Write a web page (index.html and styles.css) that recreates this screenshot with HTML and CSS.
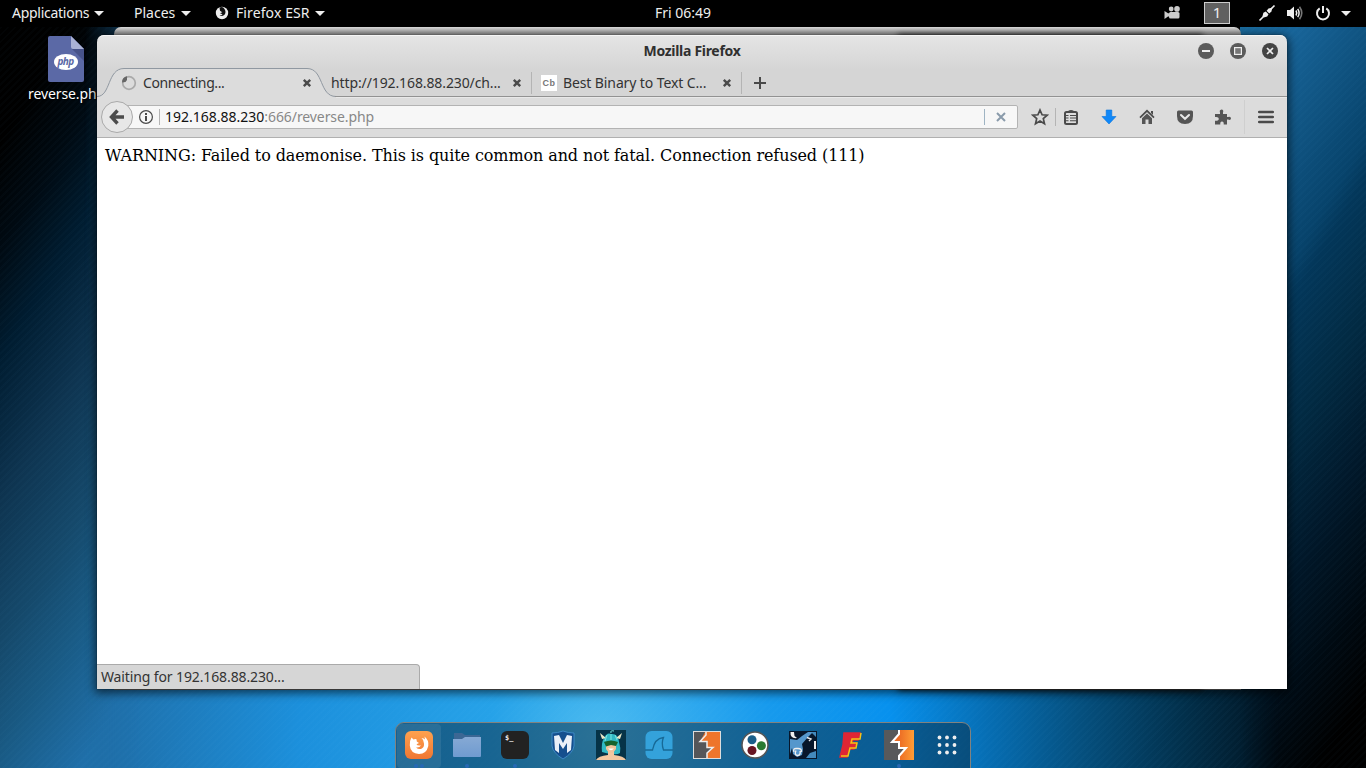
FILE: index.html
```html
<!DOCTYPE html>
<html lang="en">
<head>
<meta charset="utf-8">
<title>Mozilla Firefox</title>
<link rel="stylesheet" href="styles.css">
</head>
<body>
<div class="desktop">
  <header class="topbar">
    <div class="menu m-apps"><span class="t-apps">Applications</span><i class="caret"></i></div>
    <div class="menu m-places"><span class="t-places">Places</span><i class="caret"></i></div>
    <div class="menu m-ff">
      <svg width="14" height="14" viewBox="0 0 14 14"><circle cx="7" cy="7" r="6.2" fill="#eee"/><path d="M4.5 1.5Q8 0 9.5 3Q11.5 6 9.5 8.8Q7 11 4.5 9.5Q6.8 9.6 7.5 8.2L5 7.2L7.3 6.2L5 4.8Z" fill="#111"/></svg>
      <span class="t-ff">Firefox ESR</span><i class="caret"></i>
    </div>
    <div class="clock">Fri 06:49</div>
    <div class="tray">
      <svg class="cam" width="17" height="14" viewBox="0 0 17 14" fill="#ccc"><circle cx="7.2" cy="3" r="2.4"/><circle cx="13" cy="2.9" r="2.8"/><rect x="5" y="6" width="10.5" height="6.5" rx="1.5"/><path d="M.5 5L4 7.2H6V10.5H4L.5 13Z"/></svg>
      <span class="ws">1</span>
      <svg class="plug" width="18" height="18" viewBox="0 0 18 18"><path d="M1.5 16.5L5 13M13 5L16.5 1.5" stroke="#eee" stroke-width="1.6"/><path d="M4 14L5.4 8.8L7.8 7.5L10.5 10.2L9.2 12.6Z" fill="#eee"/><path d="M8.6 6.8L10.5 4.6L14.5 3.5L13.4 7.5L11.2 9.4Z" fill="#eee"/></svg>
      <svg class="vol" width="18" height="16" viewBox="0 0 18 16" fill="none"><path d="M1 5H4L8 1.5V14.5L4 11H1Z" fill="#eee"/><path d="M10 5.5Q11.5 8 10 10.5M11.7 3.8Q14.5 8 11.7 12.2" stroke="#eee" stroke-width="1.5"/><path d="M13.5 1.8Q18 8 13.5 14.2" stroke="#777" stroke-width="1.6"/></svg>
      <svg class="power" width="16" height="16" viewBox="0 0 16 16" fill="none" stroke="#eee" stroke-width="2"><path d="M4.7 3.4A6 6 0 1 0 11.3 3.4M8 1V8"/></svg>
      <i class="caret"></i>
    </div>
  </header>

  <div class="file">
    <svg width="36" height="46" viewBox="0 0 36 46"><path d="M2 0H23L36 13V44Q36 46 34 46H2Q0 46 0 44V2Q0 0 2 0Z" fill="#5b69a6"/><path d="M24 13H36V25Z" fill="#47538a"/><path d="M23 0L36 13H25Q23 13 23 11Z" fill="#aab2d6"/><ellipse cx="18" cy="26" rx="12" ry="8" fill="#fff"/><text x="17.5" y="29" text-anchor="middle" class="php">php</text></svg>
    <span>reverse.php</span>
  </div>

  <div class="backwin"></div>
  <div class="backwin dark"></div>

  <main class="window">
    <div class="titlebar">
      <h1>Mozilla Firefox</h1>
      <div class="controls">
        <svg width="16" height="16" viewBox="0 0 16 16"><circle cx="8" cy="8" r="8" fill="#5b5b5b"/><path d="M4 8H12" stroke="#eee" stroke-width="2"/></svg>
        <svg width="16" height="16" viewBox="0 0 16 16"><circle cx="8" cy="8" r="8" fill="#5b5b5b"/><rect x="4.6" y="4.6" width="6.8" height="6.8" fill="#777" stroke="#eee" stroke-width="1.2"/></svg>
        <svg width="16" height="16" viewBox="0 0 16 16"><circle cx="8" cy="8" r="8" fill="#444"/><path d="M5 5L11 11M11 5L5 11" stroke="#eee" stroke-width="1.7"/></svg>
      </div>
    </div>

    <div class="tabs">
      <svg class="tabshape" width="1190" height="30" viewBox="0 0 1190 30"><path d="M0 28.5C14 28.5 10 .5 27 .5H210C227 .5 222 28.5 239 28.5V30H0Z" fill="#dcdcdc"/><path d="M239 29H1190V30H239Z" fill="#e8e8e8"/><path d="M0 28.5C14 28.5 10 .5 27 .5H210C227 .5 222 28.5 239 28.5H1190" fill="none" stroke="#9098a1"/><path d="M238 28.5H1190" stroke="#929292"/></svg>
      <div class="tab first">
        <svg width="16" height="16" viewBox="0 0 16 16" fill="none"><circle cx="8" cy="8" r="6.3" stroke="#aaa" stroke-width="1.7"/><path d="M1 7.5Q1 2 6 1.2V5L4.5 7Z" fill="#666"/></svg>
        <span class="label t-con">Connecting...</span>
        <svg class="x" width="10" height="10" viewBox="0 0 10 10"><path d="M1.8 1.8L8.2 8.2M8.2 1.8L1.8 8.2" stroke="#4a4a4a" stroke-width="2.4"/></svg>
      </div>
      <div class="tab second">
        <span class="label t-http">http://192.168.88.230/ch...</span>
        <svg class="x" width="10" height="10" viewBox="0 0 10 10"><path d="M1.8 1.8L8.2 8.2M8.2 1.8L1.8 8.2" stroke="#4a4a4a" stroke-width="2.4"/></svg>
      </div>
      <div class="tab third">
        <b class="cb">Cb</b>
        <span class="label t-best">Best Binary to Text C...</span>
        <svg class="x" width="10" height="10" viewBox="0 0 10 10"><path d="M1.8 1.8L8.2 8.2M8.2 1.8L1.8 8.2" stroke="#4a4a4a" stroke-width="2.4"/></svg>
      </div>
      <svg class="plus" width="12" height="12" viewBox="0 0 12 12"><path d="M6 0V12M0 6H12" stroke="#4a4a4a" stroke-width="2"/></svg>
    </div>

    <div class="navbar">
      <div class="back"><svg width="16" height="16" viewBox="0 0 16 16" fill="none" stroke="#4c4c4c"><path d="M8.5 1.5L2.5 8L8.5 14.5M3 8H15" stroke-width="3.4"/></svg></div>
      <div class="urlbar">
        <svg class="info" width="16" height="16" viewBox="0 0 16 16"><circle cx="8" cy="8" r="6.4" fill="none" stroke="#4a4a4a" stroke-width="1.2"/><path d="M8 7V12M8 4V6" stroke="#4a4a4a" stroke-width="2"/></svg>
        <i class="sep"></i>
        <span class="url"><b>192.168.88.230</b><span class="rest">:666/reverse.php</span></span>
        <i class="sep end"></i>
        <svg class="stop" width="10" height="10" viewBox="0 0 10 10"><path d="M1 1L9 9M9 1L1 9" stroke="#8a9bab" stroke-width="2"/></svg>
      </div>
      <svg class="i-star" width="18" height="18" viewBox="0 0 18 18"><path d="M9 2L11.1 6.8L16.2 7.2L12.3 10.6L13.5 15.8L9 13L4.5 15.8L5.7 10.6L1.8 7.2L6.9 6.8Z" fill="none" stroke="#4a4a4a" stroke-width="1.7"/></svg>
      <i class="sep nav1"></i>
      <svg class="i-list" width="16" height="16" viewBox="0 0 16 16"><rect x="2" y="3" width="12" height="12" rx="1.5" fill="none" stroke="#4a4a4a" stroke-width="2"/><path d="M5 3Q5 1 8 1Q11 1 11 3Z" fill="#4a4a4a"/><path d="M3 6.5H5.5M7 6.5H13M3 9H5.5M7 9H13M3 11.7H5.5M7 11.7H13" stroke="#4a4a4a" stroke-width="1.1"/></svg>
      <svg class="i-down" width="16" height="16" viewBox="0 0 16 16"><path d="M5.2 1H10.8V7.5H15L8 15L1 7.5H5.2Z" fill="#1088f8" stroke="#0874dc" stroke-width=".6"/></svg>
      <svg class="i-home" width="16" height="16" viewBox="0 0 16 16"><path d="M1 8.6L8 1.8L15 8.6" fill="none" stroke="#4c4c4c" stroke-width="1.7"/><path d="M8 4.5L13 9.2V15H9.5V10.5H6.5V15H3V9.2Z" fill="#555"/><path d="M12 2H14V6L12 4Z" fill="#4c4c4c"/></svg>
      <svg class="i-pocket" width="16" height="16" viewBox="0 0 16 16"><path d="M1.5 1.5H14.5Q16 1.5 16 3V7Q16 15 8 15Q0 15 0 7V3Q0 1.5 1.5 1.5Z" fill="#555"/><path d="M4 6L8 9.8L12 6" fill="none" stroke="#e8e8e8" stroke-width="2.1" stroke-linecap="round"/></svg>
      <svg class="i-puzzle" width="16" height="16" viewBox="0 0 16 16"><path d="M0 5H5V3.5Q4 1 6.5 .5Q9 .8 8 3.5V5H12V8H13Q15.8 7 16 9.3Q15.8 11.8 13 10.5H12V15.5H8.7Q9 12.4 7 12.4Q5 12.4 5.3 15.5H0V11.7Q3.8 12 3.8 9.7Q3.8 7.5 0 8Z" fill="#555"/></svg>
      <i class="sep nav2"></i>
      <svg class="i-menu" width="16" height="14" viewBox="0 0 16 14"><path d="M1.2 2H14.8M1.2 7H14.8M1.2 12H14.8" stroke="#4a4a4a" stroke-width="2.6" stroke-linecap="round"/></svg>
    </div>

    <div class="page"><p>WARNING: Failed to daemonise. This is quite common and not fatal. Connection refused (111)</p>
      <div class="status"><span>Waiting for 192.168.88.230...</span></div>
    </div>
  </main>

  <nav class="dock">
    <div class="app active"><svg width="30" height="30" viewBox="0 0 30 30"><defs><linearGradient id="or" x2="0" y2="1"><stop stop-color="#ffa24f"/><stop offset="1" stop-color="#ef7632"/></linearGradient></defs><rect x="1" y="1" width="28" height="28" rx="6" fill="url(#or)"/><path d="M7.5 7.5L9.5 9.5Q11 8.8 12.5 9.3L12.8 11.5L15 13L12.5 14.3Q13 16 17 15.5Q15.5 18 12 17.5Q14 19.5 17 19Q20.5 17.5 20 13.5Q20 10 17.5 8Q20 8.3 21 9.5L20.5 6.5Q25 10 24.3 16Q22.5 24 15 24Q6.5 23.5 5.8 15.5Q5.3 11 7.5 7.5Z" fill="#fff"/></svg><u></u><u></u></div>
    <div class="app"><svg width="30" height="30" viewBox="0 0 30 30"><defs><linearGradient id="fo" x2="0" y2="1"><stop stop-color="#86a9d4"/><stop offset="1" stop-color="#6f9bd0"/></linearGradient></defs><path d="M2 3H10L13 5H28V12H2Z" fill="#3c6794"/><path d="M1 9H10L13 7H29V26Q29 27 28 27H2Q1 27 1 26Z" fill="url(#fo)"/></svg><u></u></div>
    <div class="app"><svg width="30" height="30" viewBox="0 0 30 30"><rect x="1" y="1" width="28" height="28" rx="6" fill="#222"/><text x="5" y="10" class="term">$_</text></svg><u></u></div>
    <div class="app"><svg width="30" height="30" viewBox="0 0 30 30"><path d="M15 1Q20 3 26 3V16Q25 23 15 29Q5 23 4 16V3Q10 3 15 1Z" fill="#154f8e" stroke="#3d89c5"/><path d="M6 6L11 5L15 13L19 5L24 6L23 20L19 23V13L15 19L11 13V23L7 20Z" fill="#e9eff8"/></svg></div>
    <div class="app"><svg width="30" height="30" viewBox="0 0 30 30"><rect width="30" height="30" fill="#063347"/><path d="M6 22Q5 13 8 8Q11 2 15 4Q22 3 23 12Q25 18 24 23Q20 26 6 22Z" fill="#30b9c4"/><path d="M10 8L4 3L6 9ZM20 8L26 3L24 9Z" fill="#e9e8c6"/><path d="M0 30Q2 26 12 25V20H18V25Q28 26 30 30Z" fill="#f3c8a0"/><path d="M10 14H20V19L17 23H13L10 19Z" fill="#f1c49c"/><path d="M8 12Q15 9 22 12L20 16L15 15L10 16.5Z" fill="#17632d"/><path d="M12 18.5Q15 22 18 18.5Z" fill="#fff"/><path d="M15 3Q14 0 18 1M11 5L9 11M15 4V10M19 5L21 10" stroke="#79e4df" fill="none"/></svg></div>
    <div class="app"><svg width="30" height="30" viewBox="0 0 30 30"><rect x="1.5" y="1" width="27" height="28" rx="6" fill="#34a2db"/><path d="M1 20H8.5Q10.5 8.5 19.5 7.5Q17 13 19.5 20H29" fill="none" stroke="#176996" stroke-width="1.3"/></svg></div>
    <div class="app"><svg width="30" height="30" viewBox="0 0 30 30"><rect x="1.5" y="1.5" width="27" height="27" fill="#555659"/><path d="M13 2H28V28H15V23L21 18H15V12H8Z" fill="#ee752b"/><path d="M14 2V5L8 11.5H15V17.5H21L15 23V28" fill="none" stroke="#eee" stroke-width="1.5"/><rect x="1.5" y="1.5" width="27" height="27" fill="none" stroke="#ddd"/></svg></div>
    <div class="app"><svg width="30" height="30" viewBox="0 0 30 30"><circle cx="15" cy="15" r="13" fill="#fff" stroke="#555" stroke-width="1.5"/><circle cx="12" cy="9.7" r="4.5" fill="#195e89"/><circle cx="21.4" cy="15.7" r="4.5" fill="#297a32"/><circle cx="12" cy="20.5" r="4.5" fill="#681522"/></svg></div>
    <div class="app"><svg width="30" height="30" viewBox="0 0 30 30"><rect x="1" y="1" width="28" height="28" fill="#07172b"/><path d="M2 9L9 10L14 6L20 2H25L20 7L14 14L15 19L14 25L9 27L5 24L4 18L2 24Z" fill="#5597cc"/><path d="M2.5 2Q2 9 9 8L6.5 6L6 2Z" fill="#eee"/><path d="M19 7.5L23 9L21 11M6 22Q4.5 18 9 18.5Q14 18 13.5 22M8 20.5Q6 25 9.5 25.5Q13 25 12 21" fill="none" stroke="#eee" stroke-width="1.4"/><path d="M23 2H28V7ZM18 28L22 23L28 21V28Z" fill="#438abd"/><path d="M27 11V19" stroke="#eee" stroke-width="2"/></svg></div>
    <div class="app"><svg width="30" height="30" viewBox="0 0 30 30"><path d="M8 3H24L22 10H17L16 13H20L18 19H13L11 27H4L7 15Z" fill="#df2634" stroke="#df2634" stroke-width="1.5"/><path d="M25 3L24 9H16L15 13H21L20 18H14L12 26H5" fill="none" stroke="#f5c414" stroke-width="1.5"/></svg></div>
    <div class="app"><svg width="30" height="30" viewBox="0 0 30 30"><defs><linearGradient id="bo"><stop offset=".3" stop-color="#eb6b24"/><stop offset="1" stop-color="#ff9d35"/></linearGradient></defs><rect width="30" height="30" fill="#58595b"/><path d="M15 0H30V30H15V26L22 18H15V12H8L15 4Z" fill="url(#bo)"/><path d="M15 0V4L8 12H15V18H22L15 26V30" fill="none" stroke="#fff" stroke-width="2"/></svg><u></u></div>
    <div class="app"><svg width="30" height="30" viewBox="0 0 30 30" fill="#eee"><circle cx="7.5" cy="7.5" r="1.9"/><circle cx="15" cy="7.5" r="1.9"/><circle cx="22.5" cy="7.5" r="1.9"/><circle cx="7.5" cy="15" r="1.9"/><circle cx="15" cy="15" r="1.9"/><circle cx="22.5" cy="15" r="1.9"/><circle cx="7.5" cy="22.5" r="1.9"/><circle cx="15" cy="22.5" r="1.9"/><circle cx="22.5" cy="22.5" r="1.9"/></svg></div>
  </nav>
</div>
</body>
</html>
```
FILE: styles.css
```css
* { box-sizing: border-box; }
body { margin: 0; overflow: hidden; font: 14px/20px "Noto Sans", sans-serif; }
svg { display: block; flex: none; }
span, b { white-space: nowrap; }
.desktop {
  position: relative; width: 1366px; height: 768px; overflow: hidden;
  background:
    repeating-linear-gradient(135deg, rgba(120,200,255,.025) 0 2px, transparent 2px 5px),
    radial-gradient(circle at 600px 735px, #4cbbf0 0, #26a2e8 110px, #1c90dc 300px, #1f6fa9 490px, #1b5a82 580px, #164668 640px) 0 0 / 600px 768px no-repeat,
    radial-gradient(circle at 0 735px, #4cbbf0 0, #179aed 170px, #0791ee 290px, #066db2 390px, #05507f 480px, #02314d 580px, #01121e 680px, #000 760px) 600px 0 / 766px 768px no-repeat;
}
/* Wallpaper glow along the two screen edges */
.desktop::before, .desktop::after { content: ""; position: absolute; top: 27px; height: 741px; }
.desktop::before {
  left: 0; width: 140px;
  background: repeating-linear-gradient(135deg, rgba(120,200,255,.02) 0 2px, transparent 2px 5px), linear-gradient(121deg, #000 60px, #000a12 115px, #001c30 170px, #0e3450 245px, #15496b 320px, #195a84 375px, #1f6fa9 450px);
  -webkit-mask-image: linear-gradient(90deg, #000 85px, transparent 140px);
  mask-image: linear-gradient(90deg, #000 85px, transparent 140px);
}
.desktop::after {
  right: 0; width: 126px;
  background: repeating-linear-gradient(135deg, rgba(120,200,255,.02) 0 2px, transparent 2px 5px), linear-gradient(121deg, #1a6c9f 0, #18659a 45px, #105482 105px, #07436b 165px, #03375a 185px, #022a42 255px, #01182a 325px, #000a12 395px, #000 450px);
  -webkit-mask-image: linear-gradient(90deg, transparent, #000 40px), linear-gradient(#000 60px, transparent 60px);
  mask-image: linear-gradient(90deg, transparent, #000 40px), linear-gradient(#000 60px, transparent 60px);
}
.topbar { position: relative; display: flex; align-items: center; height: 27px; background: #000; color: #eee; }
.topbar span, .clock { line-height: 26px; }
.menu { display: flex; align-items: center; height: 26px; margin-top: -1px; }
.m-apps { padding-left: 12px; width: 134px; }
.m-places { width: 81px; }
.menu span { flex: none; }
.t-apps { width: 77px; letter-spacing: -.27px; }
.t-places { width: 42px; }
.t-ff { width: 74px; margin-left: 7px; letter-spacing: .1px; }
.caret { flex: none; margin-left: 5px; border: 5px solid transparent; border-top-color: #eee; border-bottom: 0; }
.clock { position: absolute; left: 655px; top: 0; }
.tray { display: flex; align-items: center; margin-left: auto; height: 26px; margin-top: -1px; padding-right: 15px; }
.ws { width: 26px; height: 22px; margin: 0 28px 0 23px; border: 1px solid #ccc; background: #606060; text-align: center; font-size: 15px; }
.topbar .ws { line-height: 19px; }
.vol { margin-left: 10px; }
.power { margin-left: 11px; }
.tray .caret { margin-left: 10px; }
.file { position: absolute; z-index: 1; left: 28px; top: 36px; width: 76px; color: #fff; }
.file svg { margin: 0 0 2px 20px; }
.file span { display: block; line-height: 20px; text-shadow: 1px 1px 1px #000; letter-spacing: -.1px; }
.php { font: italic bold 10px "Noto Sans", sans-serif; letter-spacing: -.7px; fill: #5b69a6; }
.backwin { position: absolute; z-index: 1; left: 114px; top: 27px; width: 1127px; height: 663px; border-radius: 7px 7px 0 0; background: linear-gradient(#ddd, #999 7px, #777); }
.backwin.dark { left: 899px; width: 303px; top: 36px; height: 653px; background: #111; border-radius: 0; box-shadow: 0 0 6px 1px #111; }
.window { position: absolute; z-index: 2; left: 97px; top: 35px; width: 1190px; height: 654px; display: flex; flex-direction: column; border-radius: 7px 7px 0 0; overflow: visible; box-shadow: 0 2px 10px 2px rgba(0,0,0,.6), 0 0 1px #000; background: linear-gradient(#e5e5e5, #d5d5d5 35px); color: #333; }
.titlebar { position: relative; flex: none; height: 33px; border-top: 1px solid #f5f5f5; border-radius: 7px 7px 0 0; display: flex; justify-content: center; }
h1 { margin: 5px 0 0; font: bold 14px/20px "Noto Sans", sans-serif; letter-spacing: -.3px; color: #303030; }
.controls { position: absolute; right: 9px; top: 7px; display: flex; gap: 16px; }
.tabs { position: relative; flex: none; height: 30px; display: flex; align-items: center; }
.tabshape { position: absolute; left: 0; top: 0; }
.tab { position: relative; display: flex; align-items: center; height: 30px; }
.label { flex: 1; }
.first { width: 191px; margin-left: 24px; }
.first .label { margin-left: 6px; }
.t-con { letter-spacing: -.38px; }
.t-http, .t-best { letter-spacing: -.11px; }
.second { width: 191px; margin-left: 19px; }
.third { width: 191px; margin-left: 19px; }
.third .label { margin-left: 6px; }
.second::after, .third::after { content: ""; width: 1px; height: 22px; background: #b4b4b4; margin-left: 9px; margin-right: -10px; }
.cb { width: 16px; height: 16px; background: #fff; color: #777; font: bold 9px/16px "Liberation Sans", sans-serif; text-align: center; letter-spacing: .5px; }
.plus { margin-left: 22px; position: relative; }
.navbar { flex: none; height: 40px; padding-bottom: 1px; background: #dcdcdc; border-bottom: 1px solid #b0b0b0; display: flex; align-items: center; }
.back { position: relative; z-index: 1; flex: none; width: 32px; height: 32px; margin-left: 4px; border: 1px solid #a9a9a9; border-radius: 50%; background: #e7e7e7; display: flex; align-items: center; justify-content: center; }
.urlbar { width: 893px; height: 24px; margin-left: -8px; padding-left: 12px; border: 1px solid #b3b3b3; border-radius: 0 2px 2px 0; background: #f7f7f7; display: flex; align-items: center; flex: none; }
.sep { flex: none; width: 1px; height: 16px; background: #b4b4b4; }
.urlbar .sep { margin: 0 5px; }
.url { flex: 1; display: flex; }
.url b { font-weight: 400; color: #111; }
.rest { color: #888; letter-spacing: -.09px; }
.urlbar .end { margin-right: 11px; background: #9fb4c3; }
.stop { margin-right: 11px; }
.i-star { margin-left: 13px; }
.nav1 { margin-left: 6px; height: 18px; }
.i-list { margin-left: 7px; }
.i-down, .i-home, .i-pocket, .i-puzzle { margin-left: 22px; }
.nav2 { margin-left: 13px; height: 34px; background: #cfcfcf; }
.i-menu { margin-left: 13px; }
.page { position: relative; flex: 1; background: #fff; }
.page p { margin: 0; padding: 8px; font: 16px/19px "DejaVu Serif", serif; letter-spacing: -.1px; color: #000; white-space: nowrap; }
.status { position: absolute; left: 0; bottom: 0; width: 323px; height: 25px; padding-left: 4px; line-height: 24px; letter-spacing: -.12px; border: 1px solid #aaa; border-width: 1px 1px 0 0; border-radius: 0 4px 0 0; background: #d6d6d6; }
.dock { position: absolute; z-index: 3; left: 395px; top: 722px; width: 576px; height: 50px; display: flex; border: 1px solid #82827f; border-radius: 9px 9px 0 0; background: rgba(10,40,60,.5); }
.app { position: relative; width: 48px; flex: none; display: flex; justify-content: center; padding-top: 7px; margin-left: -1px; margin-right: 1px; }
.active::before { content: ""; position: absolute; left: 2px; top: 1px; width: 44px; height: 44px; background: rgba(255,255,255,.08); border-radius: 4px; }
.app svg { position: relative; }
.app u { position: absolute; left: 22px; top: 41px; width: 4px; height: 4px; border-radius: 50%; background: #2868b4; }
.active u { left: 19px; }
.active u + u { left: 25px; }
.term { font: bold 7px "DejaVu Sans Mono", monospace; fill: #eee; }
```
